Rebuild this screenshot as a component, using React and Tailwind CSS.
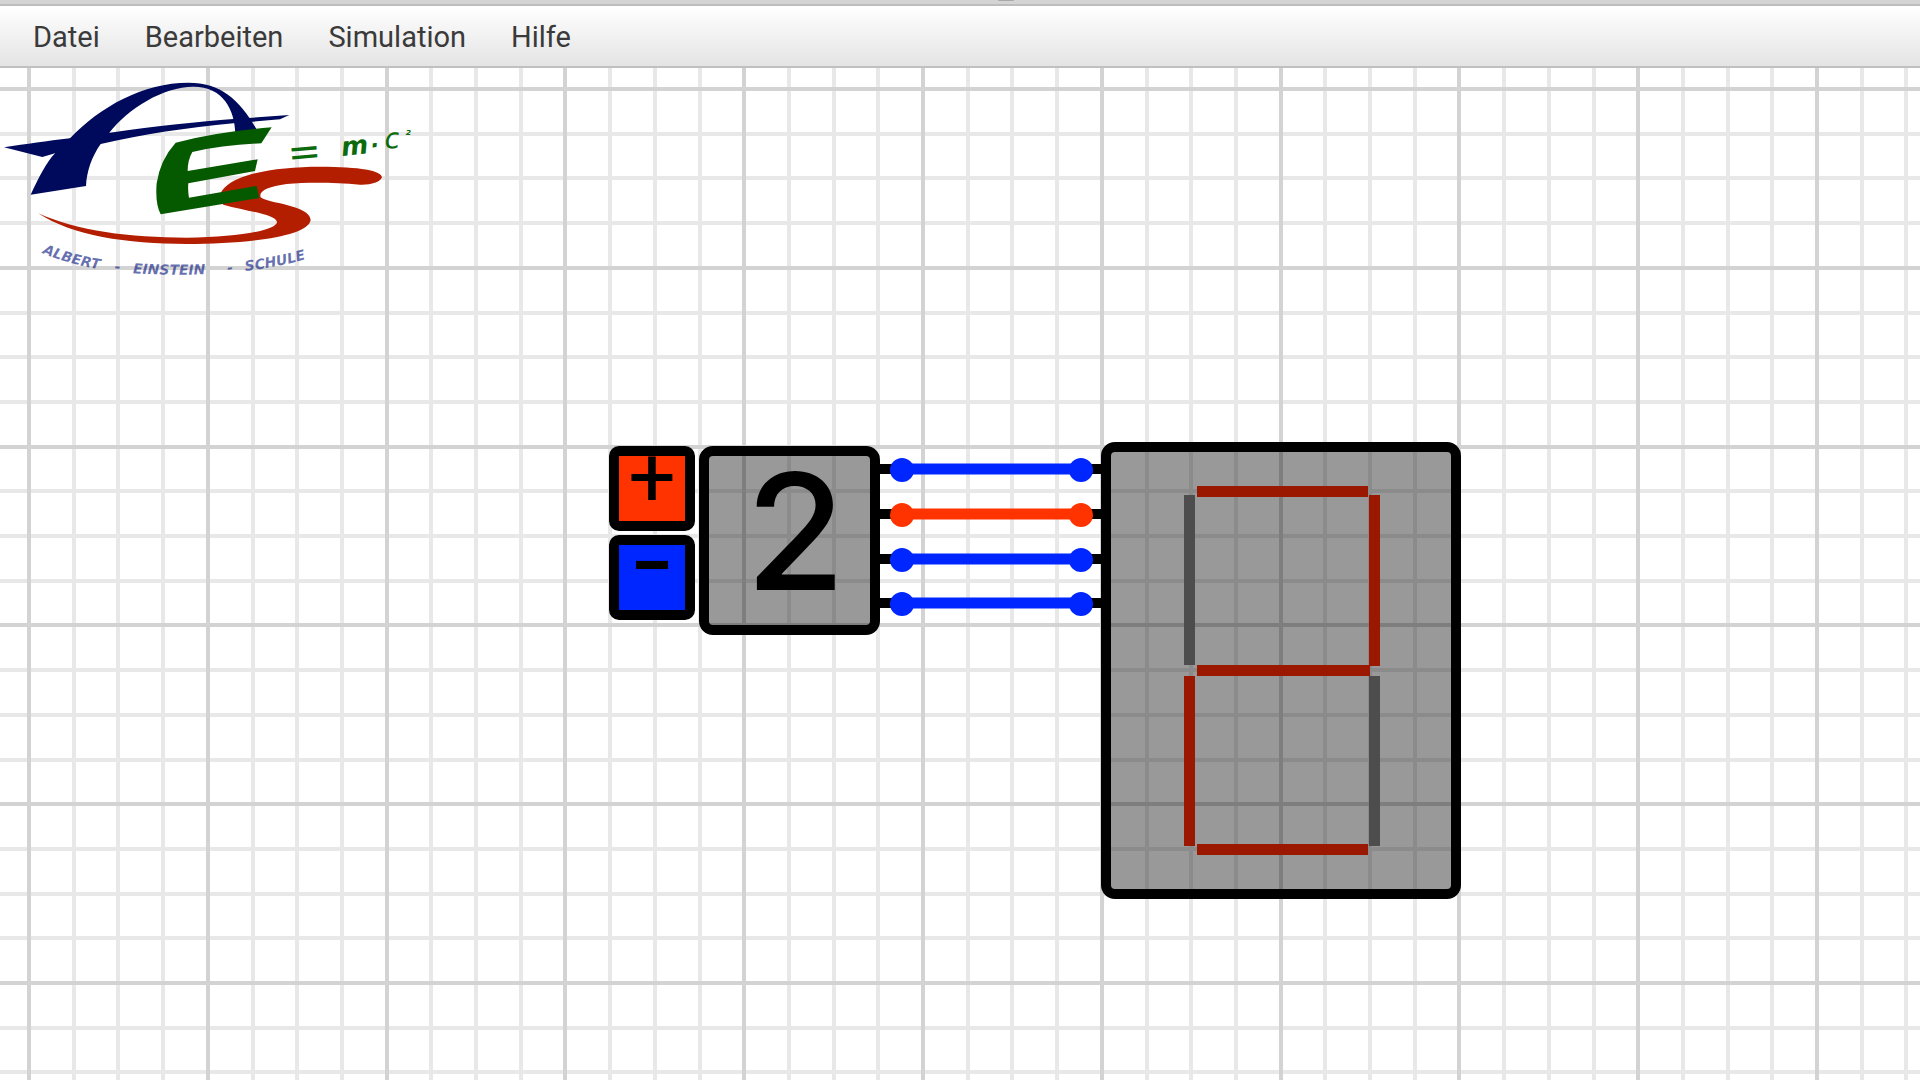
import React from "react";

const MENU = ["Datei", "Bearbeiten", "Simulation", "Hilfe"];

// Ten fields of the circuit grid make up 447 pixels.
const gridAt = (start, i) => start + Math.round((i * 447) / 10);
const COLUMNS = Array.from({ length: 90 }, (_, i) => i);
const ROWS = Array.from({ length: 60 }, (_, i) => i);

const BLUE = "#0026ff";
const RED = "#ff3300";

const WIRES = [
  { y: 401, color: BLUE },
  { y: 446, color: RED },
  { y: 491, color: BLUE },
  { y: 535, color: BLUE },
];

const SEGMENTS = [
  { id: "a", x: 86, y: 34, w: 171, h: 11, on: true },
  { id: "b", x: 258, y: 43, w: 11, h: 171, on: true },
  { id: "c", x: 258, y: 224, w: 11, h: 170, on: false },
  { id: "d", x: 86, y: 392, w: 171, h: 11, on: true },
  { id: "e", x: 73, y: 224, w: 11, h: 170, on: true },
  { id: "f", x: 73, y: 43, w: 11, h: 170, on: false },
  { id: "g", x: 86, y: 213, w: 173, h: 11, on: true },
];

function MenuBar() {
  return (
    <header>
      <div className="h-[6px] border-b-2 border-[#bdbdbd] bg-[#d4d4d4]">
        <div className="ml-[52%] h-px w-4 rounded-b bg-[#a8a8a8]" />
      </div>
      <nav className="flex h-[62px] items-center gap-[45px] border-b-2 border-[#c0c0c0] bg-linear-to-b from-white to-[#e4e4e4] px-[33px] pt-0.5">
        {MENU.map((item) => (
          <button key={item} type="button" className="text-[29px] leading-8 text-[#3a3a3a]">
            {item}
          </button>
        ))}
      </nav>
    </header>
  );
}

function Grid() {
  return (
    <svg className="absolute inset-0 h-full w-full" aria-hidden="true">
      <g stroke="#e8e8e8" strokeWidth="4">
        {COLUMNS.filter((i) => i % 4).map((i) => (
          <line key={i} x1={gridAt(29, i)} x2={gridAt(29, i)} y1="0" y2="100%" />
        ))}
        {ROWS.filter((i) => i % 4).map((i) => (
          <line key={i} y1={gridAt(21, i)} y2={gridAt(21, i)} x1="0" x2="100%" />
        ))}
      </g>
      <g stroke="#d3d3d3" strokeWidth="4">
        {COLUMNS.filter((i) => i % 4 === 0).map((i) => (
          <line key={i} x1={gridAt(29, i)} x2={gridAt(29, i)} y1="0" y2="100%" />
        ))}
        {ROWS.filter((i) => i % 4 === 0).map((i) => (
          <line key={i} y1={gridAt(21, i)} y2={gridAt(21, i)} x1="0" x2="100%" />
        ))}
      </g>
    </svg>
  );
}

function Logo() {
  return (
    <svg
      className="absolute left-0 top-0.5 h-[215px] w-[430px]"
      viewBox="0 0 1290 645"
      role="img"
      aria-label="Albert-Einstein-Schule"
    >
      <g fill="#000a5c">
        <path d="M92 374C115 325 140 275 165 250L210 205C300 110 430 38 565 38C665 38 720 90 772 182L706 190C704 120 670 50 580 50C490 50 385 115 328 188L302 222C275 260 260 305 258 348Z" />
        <path d="M12 232C80 222 140 213 210 205L330 188C470 168 600 155 700 147L868 135L840 148L700 160C560 173 430 193 302 222L165 250L127 261Z" />
      </g>
      <path
        fill="#b41e00"
        d="M115 430C230 483 390 503 560 503C720 502 830 480 831 456C826 432 740 424 670 404C655 390 655 370 675 352C720 308 840 290 960 290C1080 290 1145 302 1146 322C1140 338 1112 345 1080 344C1000 337 920 337 860 342C805 350 775 362 782 382C800 400 930 405 932 450C925 500 740 522 560 522C380 522 215 497 115 430Z"
      />
      <path
        fill="#055a00"
        d="M527 218Q650 185 815 172L784 220Q670 224 577 246Q563 270 563 303L773 268L765 303L565 340Q563 360 567 383L770 348L778 384L482 433Q465 400 470 340Q480 270 527 218Z"
      />
      <g fill="#0b6a0b" fontFamily="DejaVu Sans" fontStyle="italic">
        <text x="866" y="290" fontSize="120" transform="rotate(-5 866 290)">=</text>
        <text x="1026" y="258" fontSize="78" fontWeight="bold" transform="rotate(-6 1026 258)">m</text>
        <text x="1114" y="250" fontSize="66" fontWeight="bold" transform="rotate(-6 1114 250)">·</text>
        <text x="1156" y="237" fontSize="84" transform="rotate(-6 1156 237)">c</text>
        <text x="1216" y="208" fontSize="38" fontWeight="bold">²</text>
      </g>
      <path id="motto" d="M112 542Q250 610 500 614Q760 618 950 558" fill="none" />
      <g
        fill="#00107c"
        fillOpacity="0.6"
        fontFamily="DejaVu Sans"
        fontStyle="italic"
        fontWeight="bold"
        fontSize="42"
      >
        <text>
          <textPath href="#motto" startOffset="16">ALBERT</textPath>
        </text>
        <text>
          <textPath href="#motto" startOffset="240">-</textPath>
        </text>
        <text>
          <textPath href="#motto" startOffset="296">EINSTEIN</textPath>
        </text>
        <text>
          <textPath href="#motto" startOffset="580">-</textPath>
        </text>
        <text>
          <textPath href="#motto" startOffset="634">SCHULE</textPath>
        </text>
      </g>
    </svg>
  );
}

function Wires() {
  return (
    <svg className="absolute inset-0 h-full w-full" role="img" aria-label="Leitungen">
      {WIRES.map(({ y, color }) => (
        <g key={y}>
          <line x1="878" x2="1104" y1={y} y2={y} stroke="#000" strokeWidth="10" />
          <line x1="902" x2="1081" y1={y} y2={y} stroke={color} strokeWidth="11" />
          <circle cx="902" cy={y + 1} r="12" fill={color} />
          <circle cx="1081" cy={y + 1} r="12" fill={color} />
        </g>
      ))}
    </svg>
  );
}

function Counter() {
  return (
    <div className="absolute left-[609px] top-[378px] flex items-start gap-1">
      <div className="flex flex-col gap-1">
        <button
          type="button"
          aria-label="Erhöhen"
          className="flex h-[85px] w-[86px] items-start justify-center rounded-[10px] border-10 border-black bg-[#ff3300] text-[84px] leading-[44px]"
        >
          +
        </button>
        <button
          type="button"
          aria-label="Verringern"
          className="flex h-[85px] w-[86px] items-start justify-center rounded-[10px] border-10 border-black bg-[#0026ff] font-[Inter,sans-serif] text-[100px] leading-[30px]"
        >
          -
        </button>
      </div>
      <output className="flex h-[189px] w-[181px] items-center justify-center rounded-[14px] border-10 border-black bg-black/40 pb-5 pl-3 font-[Inter,sans-serif] text-[162px] leading-[170px] font-medium">
        2
      </output>
    </div>
  );
}

function SevenSegment() {
  return (
    <div className="absolute left-[1101px] top-[374px] rounded-[14px] border-10 border-black bg-black/40">
      <svg className="block h-[437px] w-[340px]" role="img" aria-label="Siebensegmentanzeige: 2">
        {SEGMENTS.map((s) => (
          <rect key={s.id} x={s.x} y={s.y} width={s.w} height={s.h} fill={s.on ? "#9b1800" : "#4d4d4d"} />
        ))}
      </svg>
    </div>
  );
}

export default function App() {
  return (
    <div className="flex min-h-screen flex-col bg-white font-['Roboto',sans-serif] text-black">
      <MenuBar />
      <main className="relative flex-1 overflow-hidden">
        <Grid />
        <Logo />
        <Wires />
        <Counter />
        <SevenSegment />
      </main>
    </div>
  );
}
